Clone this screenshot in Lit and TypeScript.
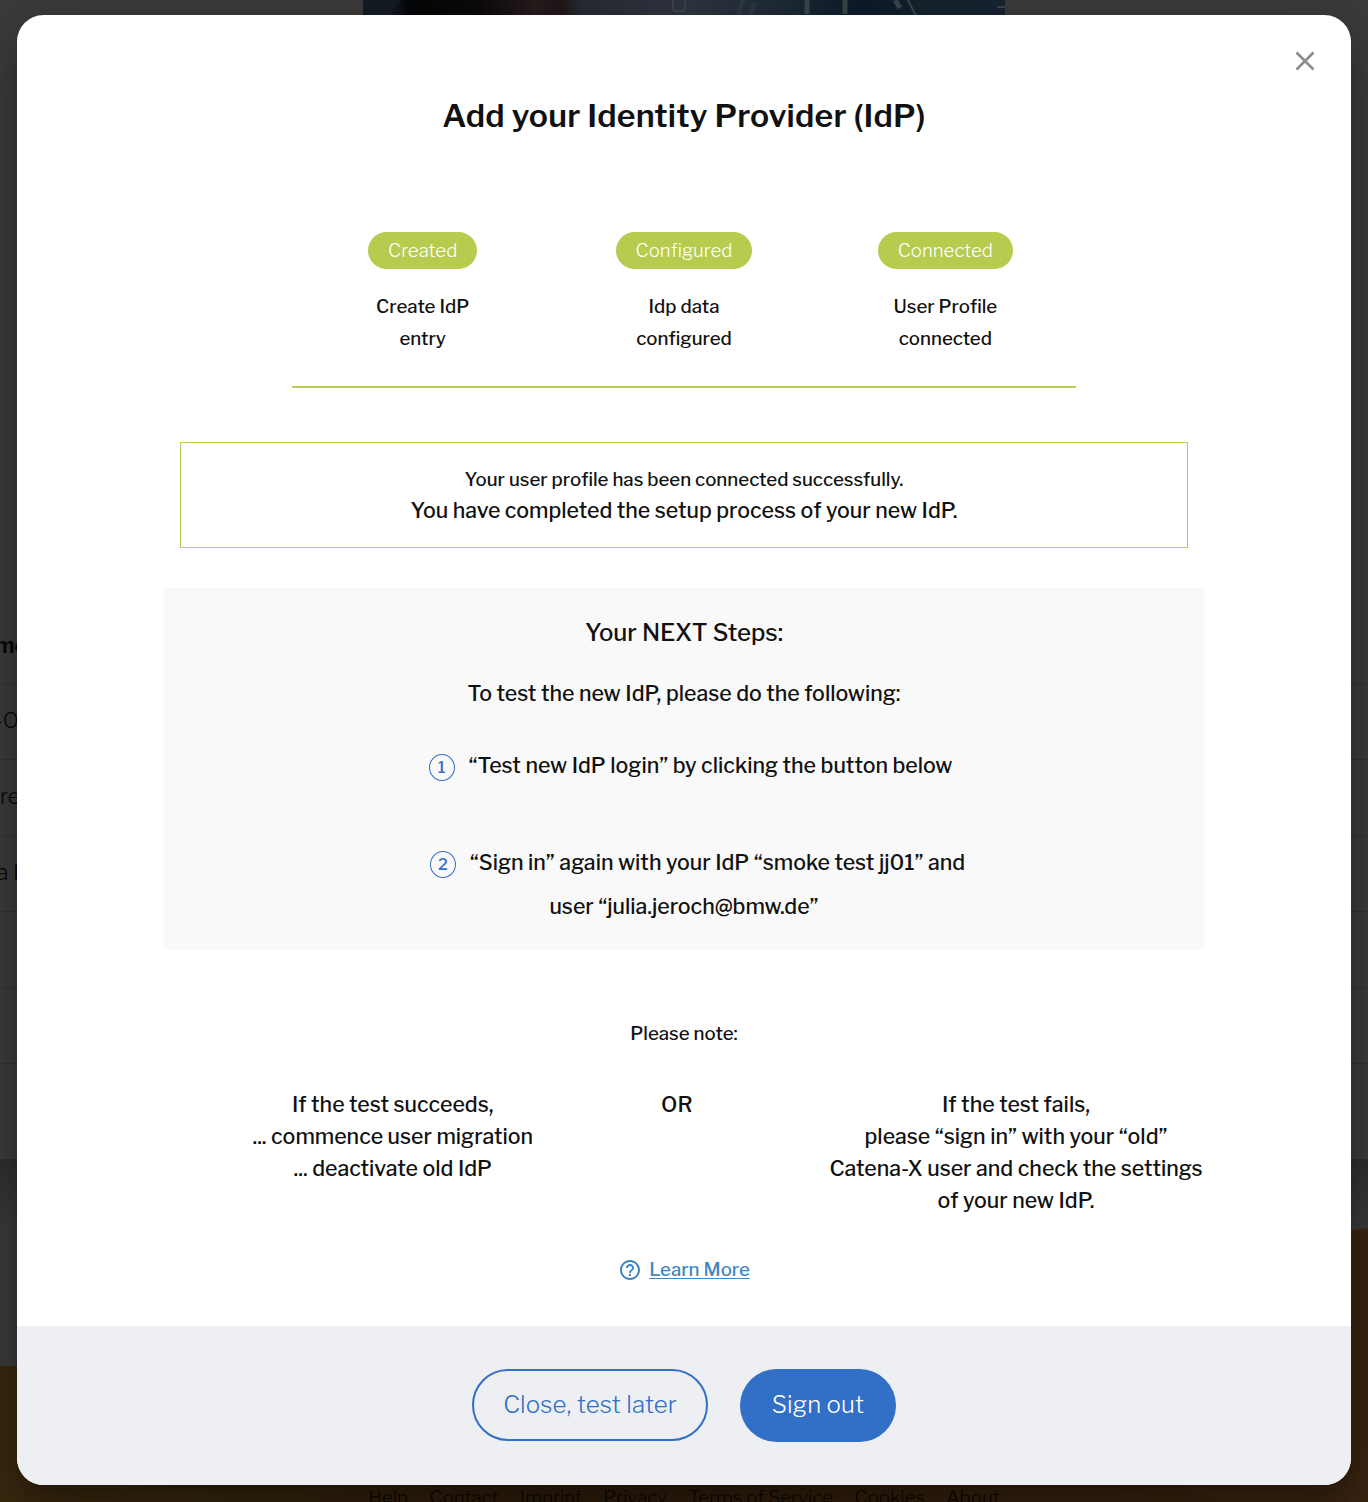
import { LitElement, html, css } from "lit";
import { customElement } from "lit/decorators.js";

const steps = [
  { status: "Created", lines: ["Create IdP", "entry"] },
  { status: "Configured", lines: ["Idp data", "configured"] },
  { status: "Connected", lines: ["User Profile", "connected"] },
];
const footerLinks = ["Help", "Contact", "Imprint", "Privacy", "Terms of Service", "Cookies", "About"];

@customElement("page-backdrop")
class PageBackdrop extends LitElement {
  static styles = css`
    :host { display: flex; flex-direction: column; height: 1502px; overflow: hidden; background: #3b3b3b; color: #080808; font-weight: 300; }
    .hero { height: 600px; }
    .hero svg { display: block; margin-left: 363px; }
    .rows { display: flex; flex-direction: column; height: 559px; }
    .row { height: 75px; border-bottom: 1px solid #313131; display: flex; align-items: center; white-space: pre; font-size: 21.33px; }
    .row.head { height: 83px; font-weight: 700; }
    .row span { flex: none; width: 120px; margin-left: -101px; padding-bottom: 3px; text-align: right; }
    .head .h { margin-left: -93px; padding: 6px 0 0; }
    .row .c2 { margin-left: -100px; }
    .row:last-child { border: 0; }
    .art { height: 343px; display: grid; }
    .art svg, .links { grid-area: 1 / 1; }
    .links { align-self: end; display: flex; justify-content: center; gap: 21.4px; font-size: 18.67px; line-height: 26px; height: 17px; overflow: hidden; color: #060402; z-index: 1; }
  `;
  render() {
    return html`
      <div class="hero">
        <svg width="642" height="16" viewBox="0 0 642 16">
          <defs>
            <linearGradient id="h"><stop offset="0" stop-color="#141c24"/><stop offset=".05" stop-color="#12181e"/><stop offset=".07" stop-color="#060708"/><stop offset=".18" stop-color="#0c0a0b"/><stop offset=".27" stop-color="#281c1d"/><stop offset=".31" stop-color="#201719"/><stop offset=".34" stop-color="#272b33"/><stop offset=".5" stop-color="#303641"/><stop offset=".66" stop-color="#1d2a35"/><stop offset=".78" stop-color="#0e1a2b"/><stop offset=".88" stop-color="#17242e"/><stop offset="1" stop-color="#182431"/></linearGradient>
          </defs>
          <rect width="642" height="16" fill="url(#h)"/>
          <path d="M0 0h38q-8 6-11 16H0z" fill="#141c24"/>
          <g fill="none" stroke="#39454a" stroke-width="2"><path d="M310 0v9q0 2 2 2h8q2 0 2-2V0"/><path d="M376 16q0-9 5-16M387 16q1-7 5-13" stroke-width="4" stroke="#2c3b42"/><path d="M444 0v14M482 0v14" stroke-width="5"/><path d="M532 0l5 8" stroke-width="5"/><path d="M545 0l8 16M634 7h8"/></g>
        </svg>
      </div>
      <div class="rows">
        <div class="row head"><span class="h">Name</span></div>
        <div class="row"><span>CX-O</span></div>
        <div class="row"><span class="c2">Share</span></div>
        <div class="row"><span>Data I</span></div>
        <div class="row"></div>
        <div class="row"></div>
        <div class="row"></div>
      </div>
      <div class="art">
        <svg width="1368" height="343" viewBox="0 0 1368 343">
          <defs>
            <linearGradient id="g" x2="0" y2="1"><stop offset="0" stop-color="#2f2f2f"/><stop offset=".2" stop-color="#3a3a3a"/></linearGradient>
            <linearGradient id="b"><stop offset="0" stop-color="#39290f"/><stop offset=".4" stop-color="#2d1c0c"/><stop offset="1" stop-color="#3a2411"/></linearGradient>
          </defs>
          <rect width="1368" height="343" fill="url(#g)"/>
          <path d="M0 207H1100L1340 73l28-4V343H0z" fill="url(#b)"/>
        </svg>
        <nav class="links">${footerLinks.map((l) => html`<span>${l}</span>`)}</nav>
      </div>
    `;
  }
}

@customElement("idp-dialog")
class IdpDialog extends LitElement {
  static styles = css`
    :host { display: flex; flex-direction: column; box-sizing: border-box; width: 1334px; height: 1470px; border-radius: 26.67px; overflow: hidden; background: #fff; color: #111; font-size: 21.33px; line-height: 32px; font-weight: 500; text-align: center; box-shadow: 0 15px 20px -9px rgba(0,0,0,.2), 0 32px 50px 4px rgba(0,0,0,.14), 0 12px 61px 11px rgba(0,0,0,.12); }
    .bar { display: flex; justify-content: flex-end; height: 75px; padding: 36px 36px 0 0; box-sizing: border-box; }
    .bar svg { display: block; }
    h1 { margin: 0; font-size: 32px; line-height: 52px; font-weight: 600; letter-spacing: .17px; }
    .content { flex: 1; display: flex; flex-direction: column; align-items: center; }
    .steps { display: grid; grid-template-columns: repeat(3, 1fr); width: 784px; height: 156px; margin-top: 90px; box-sizing: border-box; border-bottom: 2px solid #b7cb4e; font-size: 18.67px; }
    .step { display: flex; flex-direction: column; align-items: center; }
    .chip { height: 37px; line-height: 37px; padding: 0 20px; border-radius: 19px; background: #b7cb4e; color: #fff; font-weight: 300; margin-bottom: 22px; }
    .success { display: flex; flex-direction: column; width: 1008px; height: 106px; margin-top: 54px; padding-top: 21px; box-sizing: border-box; border: 1px solid #b7cb4e; }
    .success .small { line-height: 32px; height: 30px; }
    .small { font-size: 18.67px; }
    .next { display: flex; flex-direction: column; align-items: center; width: 1040px; height: 362px; margin-top: 40px; box-sizing: border-box; padding-top: 29px; background: #f9f9f9; }
    .title { font-size: 24px; }
    .intro { margin-top: 28px; }
    .item { display: flex; justify-content: center; gap: 14px; line-height: 44px; }
    .first { margin: 34px 0 53px 13px; }
    .second { margin-left: 27px; }
    .num { box-sizing: border-box; width: 26px; height: 27px; margin-top: 11px; border: 1px solid #326fc6; border-radius: 50%; color: #326fc6; font-size: 16px; line-height: 26px; }
    .wrap { line-height: 44px; }
    .note { margin-top: 68px; }
    .outcomes { display: flex; margin: 38px 0 0 87px; }
    .outcomes div { display: flex; flex-direction: column; }
    .outcomes .or { margin: 0 137px 0 128px; }
    .learn { display: flex; align-items: center; gap: 7px; margin: 37px 0 0 0; font-size: 18.67px; color: #3d87c6; }
    .learn svg { display: block; }
    .learn a { padding-top: 1px; text-decoration: underline; text-decoration-thickness: 1px; text-underline-offset: 2px; }
    footer { display: flex; justify-content: center; align-items: flex-start; gap: 32px; height: 159px; box-sizing: border-box; padding-top: 43px; background: #edeff3; }
    button { box-sizing: border-box; font: inherit; font-size: 24px; font-weight: 300; letter-spacing: .13px; border-radius: 37px; padding: 0; }
    .later { width: 236px; height: 72px; border: 2px solid #326fc6; background: transparent; color: #326fc6; }
    .out { width: 156px; height: 73px; padding-bottom: 2px; border: 0; background: #326fc6; color: #fff; }
  `;
  render() {
    return html`
      <div class="bar">
        <svg width="20" height="20" viewBox="0 0 20 20" fill="none" stroke="#8c8c8c" stroke-width="2.6"><path d="M1.5 1.5l17 17M18.5 1.5l-17 17"/></svg>
      </div>
      <div class="content">
        <h1>Add your Identity Provider (IdP)</h1>
        <div class="steps">
          ${steps.map((s) => html`<div class="step"><span class="chip">${s.status}</span>${s.lines.map((l) => html`<span>${l}</span>`)}</div>`)}
        </div>
        <div class="success">
          <span class="small">Your user profile has been connected successfully.</span>
          <span>You have completed the setup process of your new IdP.</span>
        </div>
        <section class="next">
          <span class="title">Your NEXT Steps:</span>
          <span class="intro">To test the new IdP, please do the following:</span>
          <div class="item first"><span class="num">1</span><span>“Test new IdP login” by clicking the button below</span></div>
          <div class="item second"><span class="num">2</span><span>“Sign in” again with your IdP “smoke test jj01” and</span></div>
          <span class="wrap">user “julia.jeroch@bmw.de”</span>
        </section>
        <span class="note small">Please note:</span>
        <div class="outcomes">
          <div><span>If the test succeeds,</span><span>... commence user migration</span><span>... deactivate old IdP</span></div>
          <div class="or">OR</div>
          <div><span>If the test fails,</span><span>please “sign in” with your “old”</span><span>Catena-X user and check the settings</span><span>of your new IdP.</span></div>
        </div>
        <div class="learn">
          <svg width="24" height="24" viewBox="0 0 24 24" fill="#3d87c6"><path d="M11 18h2v-2h-2v2zm1-16C6.480 2 2 6.480 2 12s4.480 10 10 10 10-4.480 10-10S17.520 2 12 2zm0 18c-4.410 0-8-3.590-8-8s3.590-8 8-8 8 3.590 8 8-3.590 8-8 8zm0-14c-2.210 0-4 1.790-4 4h2c0-1.100.9-2 2-2s2 .9 2 2c0 2-3 1.750-3 5h2c0-2.250 3-2.500 3-5 0-2.210-1.790-4-4-4z"/></svg>
          <a>Learn More</a>
        </div>
      </div>
      <footer>
        <button class="later">Close, test later</button>
        <button class="out">Sign out</button>
      </footer>
    `;
  }
}

@customElement("app-root")
class AppRoot extends LitElement {
  static styles = css`
    :host { display: block; position: relative; height: 1502px; overflow: hidden; font-family: "Libre Franklin", "Open Sans", sans-serif; }
    .modal { position: absolute; left: 17px; top: 15px; }
  `;
  render() {
    return html`<page-backdrop></page-backdrop><idp-dialog class="modal"></idp-dialog>`;
  }
}
